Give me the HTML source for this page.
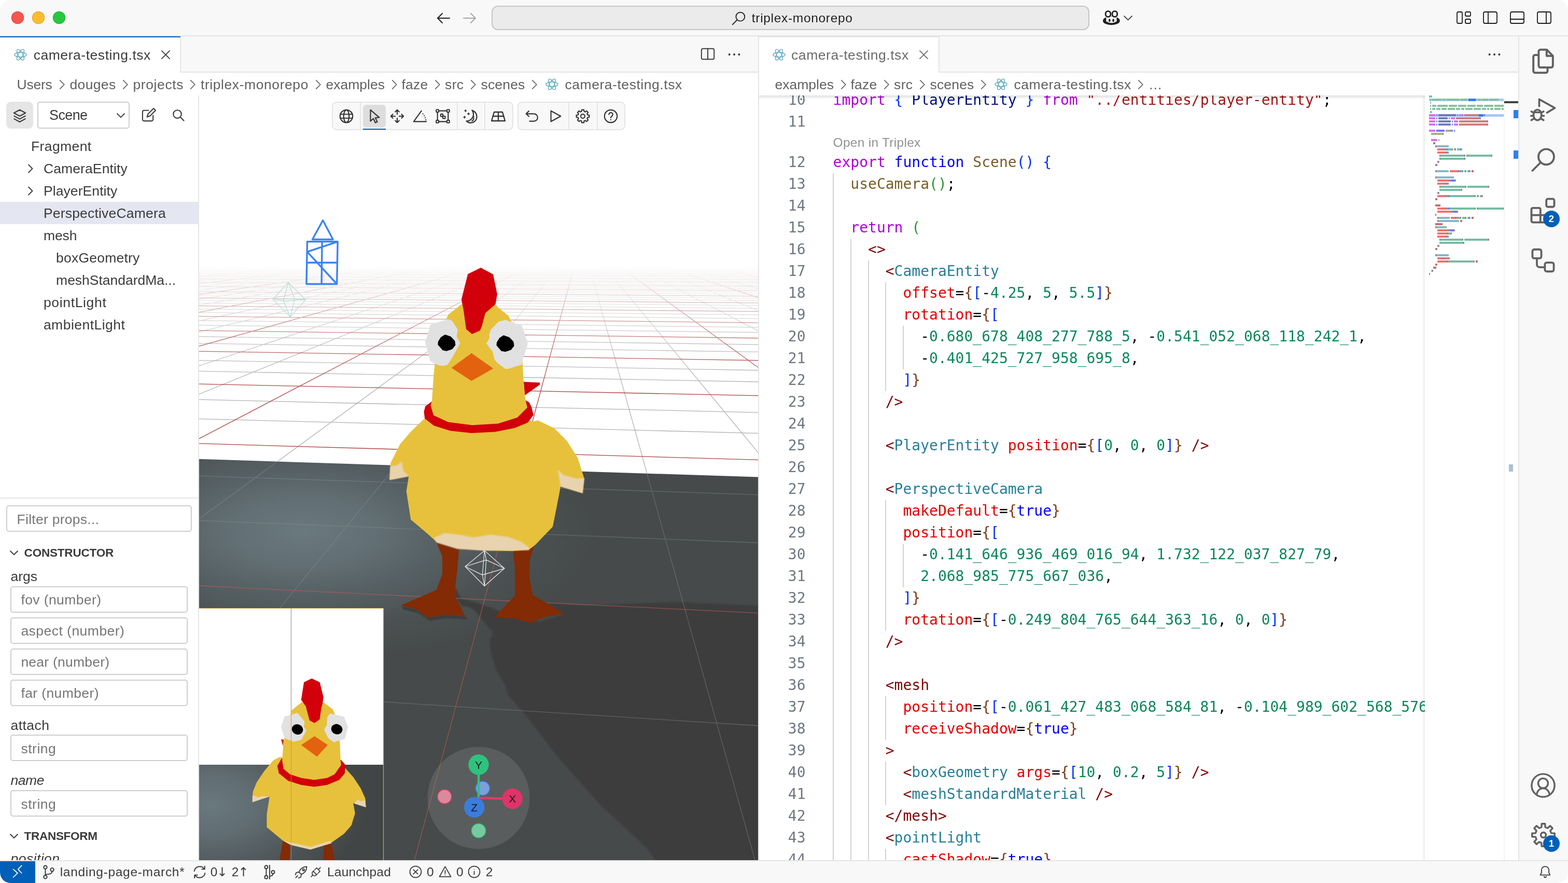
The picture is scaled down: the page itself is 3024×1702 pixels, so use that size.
<!DOCTYPE html><html><head><meta charset="utf-8"><title>camera-testing.tsx — triplex-monorepo</title><style>
html,body{margin:0;padding:0}
body{width:3024px;height:1702px;position:relative;overflow:hidden;background:#fff;font-family:"Liberation Sans",sans-serif;-webkit-font-smoothing:antialiased}
.t{position:absolute;white-space:pre}
.code{position:absolute;overflow:hidden;background:#fff;font-family:"DejaVu Sans Mono","Liberation Mono",monospace;font-size:28px}
.code .ln{position:absolute;left:0;width:89.5px;text-align:right;height:42px;line-height:42px;color:#6e7681}
.code .cl{position:absolute;left:142.6px;height:42px;line-height:42px;white-space:pre;color:#000}
.code .g{position:absolute;width:2px;background:#d3d3d3}
.code .lens{position:absolute;left:142.6px;font-family:"Liberation Sans",sans-serif;font-size:24.5px;line-height:40px;color:#919191;white-space:pre;letter-spacing:.28px}
.inp{position:absolute;box-sizing:border-box;border:2px solid #cecece;border-radius:5px;background:#fff}
</style></head><body><div id="app" style="position:absolute;left:0;top:0;width:3024px;height:1702px;overflow:hidden;will-change:transform">
<div style="position:absolute;left:0px;top:0px;width:3024px;height:68px;background:#f8f8f8;"></div>
<div style="position:absolute;left:0px;top:68px;width:3024px;height:2px;background:#e5e5e5;"></div>
<div style="position:absolute;left:22px;top:22px;width:24px;height:24px;border-radius:50%;background:#f6564f;box-shadow:inset 0 0 0 1px #e2403a"></div>
<div style="position:absolute;left:62px;top:22px;width:24px;height:24px;border-radius:50%;background:#fbbd2e;box-shadow:inset 0 0 0 1px #dfa023"></div>
<div style="position:absolute;left:102px;top:22px;width:24px;height:24px;border-radius:50%;background:#27c83f;box-shadow:inset 0 0 0 1px #1aab2c"></div>
<svg viewBox="0 0 16 16" width="32" height="32" style="position:absolute;left:838.5px;top:18.8px;overflow:visible" fill="none" stroke="#1f1f1f" stroke-width="1.05" stroke-linecap="round" stroke-linejoin="round" ><path d="M14 8H2.5M7 3.5L2.5 8 7 12.5"/></svg>
<svg viewBox="0 0 16 16" width="32" height="32" style="position:absolute;left:890.0px;top:18.8px;overflow:visible" fill="none" stroke="#a8a8a8" stroke-width="1.05" stroke-linecap="round" stroke-linejoin="round" ><path d="M2 8h11.5M9 3.5L13.5 8 9 12.5"/></svg>
<div style="position:absolute;left:948px;top:10.5px;width:1153px;height:47px;box-sizing:border-box;border:2px solid #c6c6c6;border-radius:12px;background:#ebebeb"></div>
<svg viewBox="0 0 16 16" width="30" height="30" style="position:absolute;left:1410.0px;top:19.5px;overflow:visible" fill="none" stroke="#2b2b2b" stroke-width="1.05" stroke-linecap="round" stroke-linejoin="round" ><circle cx="9.5" cy="6.5" r="4.5"/><path d="M6.3 9.7L1.5 14.5"/></svg>
<span class="t" style="left:1449.8px;top:20.3px;font-size:24.5px;line-height:30.62px;color:#1f1f1f;letter-spacing:0.69px;">triplex-monorepo</span>
<svg viewBox="0 0 33 28.4" width="33" height="28.4" style="position:absolute;left:2127px;top:19.7px;overflow:visible"><ellipse cx="16.4" cy="19.9" rx="16.4" ry="8.4" fill="#1f1f1f"/><path d="M6.3 12V21.2Q16.4 27.2 26.6 21.2V12Z" fill="#f8f8f8"/><rect x="5.2" y="1.6" width="9.6" height="10.8" rx="4.4" fill="#f8f8f8" stroke="#1f1f1f" stroke-width="2.8"/><rect x="18.1" y="1.6" width="9.6" height="10.8" rx="4.4" fill="#f8f8f8" stroke="#1f1f1f" stroke-width="2.8"/><rect x="11.1" y="16.2" width="3.4" height="6.1" rx="1.7" fill="#1f1f1f"/><rect x="18.4" y="16.2" width="3.4" height="6.1" rx="1.7" fill="#1f1f1f"/></svg>
<svg viewBox="0 0 15 7.5" width="15" height="7.5" style="position:absolute;left:2168.0px;top:30.9px;overflow:visible" fill="none" stroke="#1f1f1f" stroke-width="1.6" stroke-linecap="round" stroke-linejoin="round" stroke-linecap="butt"><path d="M0 0L7.5 7.5L15 0"/></svg>
<svg viewBox="0 0 16 16" width="32" height="32" style="position:absolute;left:2807.0px;top:18.0px;overflow:visible" fill="none" stroke="#1a1a1a" stroke-width="0.9" stroke-linecap="round" stroke-linejoin="round" ><rect x="1.5" y="2.5" width="5" height="11" rx="1"/><rect x="9.5" y="2.5" width="5" height="4" rx="1"/><rect x="9.5" y="9.5" width="5" height="4" rx="1"/></svg>
<svg viewBox="0 0 16 16" width="32" height="32" style="position:absolute;left:2858.0px;top:18.0px;overflow:visible" fill="none" stroke="#1a1a1a" stroke-width="0.9" stroke-linecap="round" stroke-linejoin="round" ><rect x="1.5" y="2.5" width="13" height="11" rx="1.5"/><path d="M6 2.5v11"/></svg>
<svg viewBox="0 0 16 16" width="32" height="32" style="position:absolute;left:2910.0px;top:18.0px;overflow:visible" fill="none" stroke="#1a1a1a" stroke-width="0.9" stroke-linecap="round" stroke-linejoin="round" ><rect x="1.5" y="2.5" width="13" height="11" rx="1.5"/><path d="M1.5 9.5h13"/></svg>
<svg viewBox="0 0 16 16" width="32" height="32" style="position:absolute;left:2962.0px;top:18.0px;overflow:visible" fill="none" stroke="#1a1a1a" stroke-width="0.9" stroke-linecap="round" stroke-linejoin="round" ><rect x="1.5" y="2.5" width="13" height="11" rx="1.5"/><path d="M10 2.5v11"/></svg>
<div style="position:absolute;left:0px;top:70px;width:3024px;height:70px;background:#f8f8f8;"></div>
<div style="position:absolute;left:0px;top:138px;width:2928px;height:2px;background:#e5e5e5;"></div>
<div style="position:absolute;left:0px;top:70px;width:348px;height:70px;background:#fff;"></div>
<div style="position:absolute;left:0px;top:70px;width:348px;height:2.2px;background:#005fb8;"></div>
<div style="position:absolute;left:347px;top:72px;width:1.5px;height:68px;background:#e5e5e5;"></div>
<svg viewBox="0 0 16 16" width="25" height="25" style="position:absolute;left:27.1px;top:92.7px;overflow:visible" fill="none" stroke="#3b3b3b" stroke-width="1.1" stroke-linecap="round" stroke-linejoin="round" ><g stroke="#4b9fbb" stroke-width=".8" fill="none"><ellipse cx="8" cy="8" rx="7.4" ry="2.9"/><ellipse cx="8" cy="8" rx="7.4" ry="2.9" transform="rotate(60 8 8)"/><ellipse cx="8" cy="8" rx="7.4" ry="2.9" transform="rotate(120 8 8)"/></g></svg>
<span class="t" style="left:64.7px;top:90.2px;font-size:26.5px;line-height:33.12px;color:#3b3b3b;letter-spacing:0.54px;">camera-testing.tsx</span>
<svg viewBox="0 0 16 16" width="27" height="27" style="position:absolute;left:306.1px;top:92.1px;overflow:visible" fill="none" stroke="#3b3b3b" stroke-width="1.05" stroke-linecap="round" stroke-linejoin="round" ><path d="M3.5 3.5l9 9M12.5 3.5l-9 9"/></svg>
<svg viewBox="0 0 16 16" width="30" height="30" style="position:absolute;left:1350.0px;top:89.0px;overflow:visible" fill="none" stroke="#3b3b3b" stroke-width="1.05" stroke-linecap="round" stroke-linejoin="round" ><rect x="1.5" y="2.5" width="13" height="11" rx="1.5"/><path d="M8 2.5v11"/></svg>
<svg viewBox="0 0 16 16" width="30" height="30" style="position:absolute;left:1401.0px;top:89.6px;overflow:visible" fill="none" stroke="#3b3b3b" stroke-width="1.1" stroke-linecap="round" stroke-linejoin="round" ><circle cx="3" cy="8" r="1.1" fill="#3b3b3b" stroke="none"/><circle cx="8" cy="8" r="1.1" fill="#3b3b3b" stroke="none"/><circle cx="13" cy="8" r="1.1" fill="#3b3b3b" stroke="none"/></svg>
<div style="position:absolute;left:1462px;top:70px;width:2px;height:1588px;background:#e5e5e5;"></div>
<div style="position:absolute;left:1464px;top:70px;width:347px;height:70px;background:#fff;"></div>
<div style="position:absolute;left:1464px;top:70px;width:347px;height:2px;background:#e3e3e3;"></div>
<div style="position:absolute;left:1810px;top:70px;width:1.5px;height:68px;background:#e5e5e5;"></div>
<svg viewBox="0 0 16 16" width="25" height="25" style="position:absolute;left:1489.5px;top:92.5px;overflow:visible" fill="none" stroke="#3b3b3b" stroke-width="1.1" stroke-linecap="round" stroke-linejoin="round" ><g stroke="#4b9fbb" stroke-width=".8" fill="none"><ellipse cx="8" cy="8" rx="7.4" ry="2.9"/><ellipse cx="8" cy="8" rx="7.4" ry="2.9" transform="rotate(60 8 8)"/><ellipse cx="8" cy="8" rx="7.4" ry="2.9" transform="rotate(120 8 8)"/></g></svg>
<span class="t" style="left:1526.0px;top:90.2px;font-size:26.5px;line-height:33.12px;color:#6b6b6b;letter-spacing:0.57px;">camera-testing.tsx</span>
<svg viewBox="0 0 16 16" width="27" height="27" style="position:absolute;left:1768.1px;top:92.1px;overflow:visible" fill="none" stroke="#6b6b6b" stroke-width="1.05" stroke-linecap="round" stroke-linejoin="round" ><path d="M3.5 3.5l9 9M12.5 3.5l-9 9"/></svg>
<svg viewBox="0 0 16 16" width="30" height="30" style="position:absolute;left:2867.0px;top:89.6px;overflow:visible" fill="none" stroke="#3b3b3b" stroke-width="1.1" stroke-linecap="round" stroke-linejoin="round" ><circle cx="3" cy="8" r="1.1" fill="#3b3b3b" stroke="none"/><circle cx="8" cy="8" r="1.1" fill="#3b3b3b" stroke="none"/><circle cx="13" cy="8" r="1.1" fill="#3b3b3b" stroke="none"/></svg>
<div style="position:absolute;left:0px;top:140px;width:1462px;height:44px;background:#fff;"></div>
<div style="position:absolute;left:1464px;top:140px;width:1464px;height:44px;background:#fff;"></div>
<span class="t" style="left:32.5px;top:146.9px;font-size:26.5px;line-height:33.12px;color:#616161;letter-spacing:-0.24px;">Users</span>
<svg viewBox="0 0 16 16" width="26" height="26" style="position:absolute;left:105.5px;top:150.3px;overflow:visible" fill="none" stroke="#616161" stroke-width="1.05" stroke-linecap="round" stroke-linejoin="round" ><path d="M6 3l5 5-5 5"/></svg>
<span class="t" style="left:134.5px;top:146.9px;font-size:26.5px;line-height:33.12px;color:#616161;letter-spacing:0.34px;">douges</span>
<svg viewBox="0 0 16 16" width="26" height="26" style="position:absolute;left:228.0px;top:150.3px;overflow:visible" fill="none" stroke="#616161" stroke-width="1.05" stroke-linecap="round" stroke-linejoin="round" ><path d="M6 3l5 5-5 5"/></svg>
<span class="t" style="left:256.5px;top:146.9px;font-size:26.5px;line-height:33.12px;color:#616161;letter-spacing:0.59px;">projects</span>
<svg viewBox="0 0 16 16" width="26" height="26" style="position:absolute;left:358.0px;top:150.3px;overflow:visible" fill="none" stroke="#616161" stroke-width="1.05" stroke-linecap="round" stroke-linejoin="round" ><path d="M6 3l5 5-5 5"/></svg>
<span class="t" style="left:387.0px;top:146.9px;font-size:26.5px;line-height:33.12px;color:#616161;letter-spacing:0.57px;">triplex-monorepo</span>
<svg viewBox="0 0 16 16" width="26" height="26" style="position:absolute;left:600.0px;top:150.3px;overflow:visible" fill="none" stroke="#616161" stroke-width="1.05" stroke-linecap="round" stroke-linejoin="round" ><path d="M6 3l5 5-5 5"/></svg>
<span class="t" style="left:628.5px;top:146.9px;font-size:26.5px;line-height:33.12px;color:#616161;letter-spacing:0.01px;">examples</span>
<svg viewBox="0 0 16 16" width="26" height="26" style="position:absolute;left:746.5px;top:150.3px;overflow:visible" fill="none" stroke="#616161" stroke-width="1.05" stroke-linecap="round" stroke-linejoin="round" ><path d="M6 3l5 5-5 5"/></svg>
<span class="t" style="left:774.5px;top:146.9px;font-size:26.5px;line-height:33.12px;color:#616161;letter-spacing:0.23px;">faze</span>
<svg viewBox="0 0 16 16" width="26" height="26" style="position:absolute;left:829.5px;top:150.3px;overflow:visible" fill="none" stroke="#616161" stroke-width="1.05" stroke-linecap="round" stroke-linejoin="round" ><path d="M6 3l5 5-5 5"/></svg>
<span class="t" style="left:858.0px;top:146.9px;font-size:26.5px;line-height:33.12px;color:#616161;letter-spacing:0.39px;">src</span>
<svg viewBox="0 0 16 16" width="26" height="26" style="position:absolute;left:898.5px;top:150.3px;overflow:visible" fill="none" stroke="#616161" stroke-width="1.05" stroke-linecap="round" stroke-linejoin="round" ><path d="M6 3l5 5-5 5"/></svg>
<span class="t" style="left:927.5px;top:146.9px;font-size:26.5px;line-height:33.12px;color:#616161;letter-spacing:0.17px;">scenes</span>
<svg viewBox="0 0 16 16" width="26" height="26" style="position:absolute;left:1017.0px;top:150.3px;overflow:visible" fill="none" stroke="#616161" stroke-width="1.05" stroke-linecap="round" stroke-linejoin="round" ><path d="M6 3l5 5-5 5"/></svg>
<svg viewBox="0 0 16 16" width="25" height="25" style="position:absolute;left:1052.0px;top:150.3px;overflow:visible" fill="none" stroke="#3b3b3b" stroke-width="1.1" stroke-linecap="round" stroke-linejoin="round" ><g stroke="#4b9fbb" stroke-width=".8" fill="none"><ellipse cx="8" cy="8" rx="7.4" ry="2.9"/><ellipse cx="8" cy="8" rx="7.4" ry="2.9" transform="rotate(60 8 8)"/><ellipse cx="8" cy="8" rx="7.4" ry="2.9" transform="rotate(120 8 8)"/></g></svg>
<span class="t" style="left:1089.5px;top:146.9px;font-size:26.5px;line-height:33.12px;color:#616161;letter-spacing:0.54px;">camera-testing.tsx</span>
<span class="t" style="left:1494.5px;top:146.9px;font-size:26.5px;line-height:33.12px;color:#616161;letter-spacing:0.01px;">examples</span>
<svg viewBox="0 0 16 16" width="26" height="26" style="position:absolute;left:1612.5px;top:150.3px;overflow:visible" fill="none" stroke="#616161" stroke-width="1.05" stroke-linecap="round" stroke-linejoin="round" ><path d="M6 3l5 5-5 5"/></svg>
<span class="t" style="left:1640.5px;top:146.9px;font-size:26.5px;line-height:33.12px;color:#616161;letter-spacing:0.23px;">faze</span>
<svg viewBox="0 0 16 16" width="26" height="26" style="position:absolute;left:1695.5px;top:150.3px;overflow:visible" fill="none" stroke="#616161" stroke-width="1.05" stroke-linecap="round" stroke-linejoin="round" ><path d="M6 3l5 5-5 5"/></svg>
<span class="t" style="left:1724.0px;top:146.9px;font-size:26.5px;line-height:33.12px;color:#616161;letter-spacing:0.39px;">src</span>
<svg viewBox="0 0 16 16" width="26" height="26" style="position:absolute;left:1764.5px;top:150.3px;overflow:visible" fill="none" stroke="#616161" stroke-width="1.05" stroke-linecap="round" stroke-linejoin="round" ><path d="M6 3l5 5-5 5"/></svg>
<span class="t" style="left:1793.5px;top:146.9px;font-size:26.5px;line-height:33.12px;color:#616161;letter-spacing:0.17px;">scenes</span>
<svg viewBox="0 0 16 16" width="26" height="26" style="position:absolute;left:1883.0px;top:150.3px;overflow:visible" fill="none" stroke="#616161" stroke-width="1.05" stroke-linecap="round" stroke-linejoin="round" ><path d="M6 3l5 5-5 5"/></svg>
<svg viewBox="0 0 16 16" width="25" height="25" style="position:absolute;left:1918.0px;top:150.3px;overflow:visible" fill="none" stroke="#3b3b3b" stroke-width="1.1" stroke-linecap="round" stroke-linejoin="round" ><g stroke="#4b9fbb" stroke-width=".8" fill="none"><ellipse cx="8" cy="8" rx="7.4" ry="2.9"/><ellipse cx="8" cy="8" rx="7.4" ry="2.9" transform="rotate(60 8 8)"/><ellipse cx="8" cy="8" rx="7.4" ry="2.9" transform="rotate(120 8 8)"/></g></svg>
<span class="t" style="left:1955.5px;top:146.9px;font-size:26.5px;line-height:33.12px;color:#616161;letter-spacing:0.54px;">camera-testing.tsx</span>
<svg viewBox="0 0 16 16" width="26" height="26" style="position:absolute;left:2186.0px;top:150.3px;overflow:visible" fill="none" stroke="#616161" stroke-width="1.05" stroke-linecap="round" stroke-linejoin="round" ><path d="M6 3l5 5-5 5"/></svg>
<span class="t" style="left:2215.0px;top:146.9px;font-size:26.5px;line-height:33.12px;color:#616161;">…</span>
<div style="position:absolute;left:0px;top:184px;width:382px;height:1474px;background:#fff;"></div>
<div style="position:absolute;left:382px;top:184px;width:2px;height:1474px;background:#e5e5e5;"></div>
<div style="position:absolute;left:12px;top:196px;width:52px;height:52px;border-radius:9px;background:#e5e5e5"></div>
<svg viewBox="0 0 16 16" width="30" height="30" style="position:absolute;left:23.0px;top:207.5px;overflow:visible" fill="none" stroke="#3b3b3b" stroke-width="1.1" stroke-linecap="round" stroke-linejoin="round" ><path d="M8 2L2 5.2 8 8.4l6-3.2zM2.3 8.3L8 11.4l5.7-3.1M2.3 11.3L8 14.4l5.7-3.1"/></svg>
<div class="inp" style="left:72px;top:196px;width:178px;height:52px"></div>
<span class="t" style="left:95.0px;top:206.4px;font-size:27px;line-height:33.75px;color:#3b3b3b;letter-spacing:-0.61px;">Scene</span>
<svg viewBox="0 0 16 16" width="22" height="22" style="position:absolute;left:222.0px;top:210.5px;overflow:visible" fill="none" stroke="#3b3b3b" stroke-width="1.4" stroke-linecap="round" stroke-linejoin="round" ><path d="M3 6l5 5 5-5"/></svg>
<svg viewBox="0 0 16 16" width="31" height="31" style="position:absolute;left:270.5px;top:206.0px;overflow:visible" fill="none" stroke="#3b3b3b" stroke-width="1.1" stroke-linecap="round" stroke-linejoin="round" ><path d="M12.5 8.5v4a1.5 1.5 0 0 1-1.5 1.5H3.5A1.5 1.5 0 0 1 2 12.5V5a1.5 1.5 0 0 1 1.5-1.5H8"/><path d="M6.5 10l1-3 5.5-5.5 2 2L9.5 9z"/></svg>
<svg viewBox="0 0 16 16" width="26" height="26" style="position:absolute;left:331.3px;top:208.8px;overflow:visible" fill="none" stroke="#3b3b3b" stroke-width="1.3" stroke-linecap="round" stroke-linejoin="round" ><circle cx="6.8" cy="6.8" r="4.8"/><path d="M10.3 10.3L14.5 14.5"/></svg>
<div style="position:absolute;left:0px;top:389px;width:382px;height:43px;background:#e4e6f1;"></div>
<span class="t" style="left:60.0px;top:265.9px;font-size:26.5px;line-height:33.12px;color:#3b3b3b;letter-spacing:0.39px;">Fragment</span>
<span class="t" style="left:83.9px;top:308.9px;font-size:26.5px;line-height:33.12px;color:#3b3b3b;letter-spacing:0.12px;">CameraEntity</span>
<svg viewBox="0 0 16 16" width="24" height="24" style="position:absolute;left:46.0px;top:313.0px;overflow:visible" fill="none" stroke="#3b3b3b" stroke-width="1.2" stroke-linecap="round" stroke-linejoin="round" ><path d="M6 3l5 5-5 5"/></svg>
<span class="t" style="left:83.9px;top:351.9px;font-size:26.5px;line-height:33.12px;color:#3b3b3b;letter-spacing:0.09px;">PlayerEntity</span>
<svg viewBox="0 0 16 16" width="24" height="24" style="position:absolute;left:46.0px;top:356.0px;overflow:visible" fill="none" stroke="#3b3b3b" stroke-width="1.2" stroke-linecap="round" stroke-linejoin="round" ><path d="M6 3l5 5-5 5"/></svg>
<span class="t" style="left:83.9px;top:394.9px;font-size:26.5px;line-height:33.12px;color:#3b3b3b;letter-spacing:0.19px;">PerspectiveCamera</span>
<span class="t" style="left:83.9px;top:438.2px;font-size:26.5px;line-height:33.12px;color:#3b3b3b;letter-spacing:-0.08px;">mesh</span>
<span class="t" style="left:108.1px;top:481.1px;font-size:26.5px;line-height:33.12px;color:#3b3b3b;letter-spacing:0.22px;">boxGeometry</span>
<span class="t" style="left:108.1px;top:524.3px;font-size:26.5px;line-height:33.12px;color:#3b3b3b;letter-spacing:-0.02px;">meshStandardMa...</span>
<span class="t" style="left:83.9px;top:567.1px;font-size:26.5px;line-height:33.12px;color:#3b3b3b;letter-spacing:0.66px;">pointLight</span>
<span class="t" style="left:83.9px;top:609.9px;font-size:26.5px;line-height:33.12px;color:#3b3b3b;letter-spacing:0.48px;">ambientLight</span>
<div style="position:absolute;left:0px;top:959px;width:382px;height:2px;background:#e5e5e5;"></div>
<div class="inp" style="left:12px;top:973.5px;width:358px;height:51px"></div>
<span class="t" style="left:32.6px;top:984.6px;font-size:26.5px;line-height:33.12px;color:#767676;letter-spacing:0.26px;">Filter props...</span>
<svg viewBox="0 0 16 16" width="22" height="22" style="position:absolute;left:16.0px;top:1054.2px;overflow:visible" fill="none" stroke="#3b3b3b" stroke-width="1.5" stroke-linecap="round" stroke-linejoin="round" ><path d="M3 6l5 5 5-5"/></svg>
<span class="t" style="left:46.6px;top:1052.1px;font-size:22.5px;line-height:28.12px;color:#3b3b3b;letter-spacing:-0.20px;font-weight:bold;">CONSTRUCTOR</span>
<span class="t" style="left:20.5px;top:1094.6px;font-size:26.5px;line-height:33.12px;color:#3b3b3b;letter-spacing:-0.01px;">args</span>
<div class="inp" style="left:20px;top:1129.5px;width:342px;height:51px"></div>
<span class="t" style="left:40.4px;top:1139.9px;font-size:26.5px;line-height:33.12px;color:#767676;letter-spacing:0.40px;">fov (number)</span>
<div class="inp" style="left:20px;top:1189.5px;width:342px;height:51px"></div>
<span class="t" style="left:40.4px;top:1199.9px;font-size:26.5px;line-height:33.12px;color:#767676;letter-spacing:0.47px;">aspect (number)</span>
<div class="inp" style="left:20px;top:1249.7px;width:342px;height:51px"></div>
<span class="t" style="left:40.4px;top:1260.1px;font-size:26.5px;line-height:33.12px;color:#767676;letter-spacing:0.24px;">near (number)</span>
<div class="inp" style="left:20px;top:1309.5px;width:342px;height:51px"></div>
<span class="t" style="left:40.4px;top:1319.9px;font-size:26.5px;line-height:33.12px;color:#767676;letter-spacing:0.39px;">far (number)</span>
<span class="t" style="left:20.5px;top:1381.6px;font-size:26.5px;line-height:33.12px;color:#3b3b3b;letter-spacing:0.47px;">attach</span>
<div class="inp" style="left:20px;top:1416.3px;width:342px;height:51px"></div>
<span class="t" style="left:40.4px;top:1426.7px;font-size:26.5px;line-height:33.12px;color:#767676;letter-spacing:0.53px;">string</span>
<span class="t" style="left:20.5px;top:1488.1px;font-size:26.5px;line-height:33.12px;color:#3b3b3b;letter-spacing:-0.45px;font-style:italic;">name</span>
<div class="inp" style="left:20px;top:1523.3px;width:342px;height:51px"></div>
<span class="t" style="left:40.4px;top:1533.7px;font-size:26.5px;line-height:33.12px;color:#767676;letter-spacing:0.53px;">string</span>
<svg viewBox="0 0 16 16" width="22" height="22" style="position:absolute;left:16.0px;top:1600.3px;overflow:visible" fill="none" stroke="#3b3b3b" stroke-width="1.5" stroke-linecap="round" stroke-linejoin="round" ><path d="M3 6l5 5 5-5"/></svg>
<span class="t" style="left:46.6px;top:1598.2px;font-size:22.5px;line-height:28.12px;color:#3b3b3b;letter-spacing:-0.30px;font-weight:bold;">TRANSFORM</span>
<div style="position:absolute;left:0;top:1630px;width:382px;height:28px;overflow:hidden"><span class="t" style="left:20.5px;top:8.6px;font-size:26.5px;line-height:33.12px;color:#3b3b3b;letter-spacing:0.46px;font-style:italic;">position</span></div>
<svg viewBox="384 184 1078 1474" width="1078" height="1474" style="position:absolute;left:384px;top:184px;display:block">
<defs>
<radialGradient id="fl" gradientUnits="userSpaceOnUse" cx="0" cy="0" r="1" gradientTransform="translate(585 1025) scale(560 250)">
<stop offset="0" stop-color="#6a797e"/><stop offset=".25" stop-color="#626f74"/><stop offset=".5" stop-color="#555f62"/><stop offset=".75" stop-color="#4b5152"/><stop offset="1" stop-color="#464a4a"/></radialGradient>
<radialGradient id="fl2" gradientUnits="userSpaceOnUse" cx="0" cy="0" r="1" gradientTransform="translate(405 1552) scale(300 190)">
<stop offset="0" stop-color="#6a797e"/><stop offset=".3" stop-color="#606d72"/><stop offset=".6" stop-color="#525a5d"/><stop offset="1" stop-color="#424545"/></radialGradient>
<linearGradient id="fade" gradientUnits="userSpaceOnUse" x1="0" y1="514" x2="0" y2="760"><stop offset="0" stop-color="#fff" stop-opacity="0"/><stop offset=".25" stop-color="#fff" stop-opacity=".3"/><stop offset=".6" stop-color="#fff" stop-opacity=".75"/><stop offset="1" stop-color="#fff" stop-opacity="1"/></linearGradient>
<mask id="gm" maskUnits="userSpaceOnUse" x="384" y="184" width="1078" height="1474"><rect x="384" y="514" width="1078" height="1144" fill="url(#fade)"/></mask>
<filter id="b1" x="-20%" y="-20%" width="140%" height="140%"><feGaussianBlur stdDeviation="1.2"/></filter>
<filter id="b6" x="-20%" y="-20%" width="140%" height="140%"><feGaussianBlur stdDeviation="1.6"/></filter>
<clipPath id="skc"><polygon points="384,184 1462,184 1462,919.5 384,884.8"/></clipPath>
<clipPath id="flc"><polygon points="384,884.8 1462,919.5 1462,1658 384,1658"/></clipPath>
<clipPath id="inset"><rect x="384" y="1172" width="356" height="486"/></clipPath>
</defs>
<rect x="384" y="184" width="1078" height="1474" fill="#fff"/>
<polygon points="384,884.8 1462,919.5 1462,1658 384,1658" fill="url(#fl)"/>
<g clip-path="url(#flc)"><polygon filter="url(#b6)" points="878.8,1134.0 880.9,1138.2 885.8,1147.9 890.0,1154.2 906.7,1157.7 924.9,1163.3 941.7,1168.9 962.6,1177.3 969.6,1184.3 1039.5,1198.3 1087.0,1183.6 1053.5,1161.9 1120.0,1167.5 1300,1160 1470,1168 1470,1670 1272,1670 1245,1632 1156,1550 1073,1456 1018,1384 980,1340 973.8,1320.0 962.6,1301.7 955.6,1287.7 951.4,1273.7 947.3,1259.7 945.2,1245.8 944.5,1231.8 949.4,1226.2 950.1,1217.8 941.7,1209.4 930.5,1195.5 920.7,1182.9 910.9,1173.1 899.7,1168.9 891.4,1168.9 880.2,1153.5 877.4,1147.9" fill="#3d3d3d"/>
<polygon filter="url(#b1)" points="775.4,1168.2 801.9,1174.5 824.3,1189.9 860.6,1185.0 897.6,1187.8 901.8,1194.1 860.6,1191.3 828.5,1196.6 806.1,1181.5 777.5,1174.8" fill="#3d3d3d"/></g>
<defs><path id="gg" d="M1265.2 500.0L1466.0 500.7M1117.9 500.0L1466.0 501.2M820.7 500.0L1466.0 502.3M670.8 500.0L1466.0 502.8M380.0 500.0L1466.0 504.0M380.0 500.6L1466.0 504.6M380.0 501.8L1466.0 505.8M380.0 502.4L1466.0 506.5M380.0 503.7L1466.0 507.9M380.0 504.3L1466.0 508.6M380.0 505.7L1466.0 510.1M380.0 506.5L1466.0 510.9M380.0 508.0L1466.0 512.6M380.0 508.8L1466.0 513.4M380.0 510.5L1466.0 515.3M380.0 511.4L1466.0 516.2M380.0 513.3L1466.0 518.3M380.0 514.3L1466.0 519.3M380.0 516.4L1466.0 521.6M380.0 517.5L1466.0 522.8M380.0 519.9L1466.0 525.4M380.0 521.2L1466.0 526.7M380.0 523.8L1466.0 529.7M380.0 525.3L1466.0 531.2M380.0 528.4L1466.0 534.5M380.0 530.0L1466.0 536.3M380.0 533.6L1466.0 540.1M380.0 535.5L1466.0 542.2M380.0 539.6L1466.0 546.7M380.0 541.9L1466.0 549.1M380.0 546.8L1466.0 554.4M380.0 549.5L1466.0 557.3M380.0 555.4L1466.0 563.7M380.0 558.6L1466.0 567.2M380.0 565.9L1466.0 574.9M380.0 569.9L1466.0 579.3M380.0 578.9L1466.0 589.0M380.0 584.0L1466.0 594.5M380.0 595.6L1466.0 607.0M380.0 602.3L1466.0 614.2M380.0 617.8L1466.0 631.0M380.0 626.9L1466.0 640.8M380.0 648.7L1466.0 664.3M380.0 661.9L1466.0 678.5M380.0 694.6L1466.0 713.8M380.0 715.3L1466.0 736.1M380.0 770.1L1466.0 795.2M380.0 807.3L1466.0 835.3M380.0 917.2L1466.0 953.8M380.0 1003.1L1466.0 1046.4M380.0 1330.1L1466.0 1399.0M410.8 500.0L380.0 501.7M433.0 500.0L380.0 503.0M477.2 500.0L380.0 505.9M499.3 500.0L380.0 507.5M543.5 500.0L380.0 511.1M565.6 500.0L380.0 513.1M609.6 500.0L380.0 517.7M631.6 500.0L380.0 520.2M675.6 500.0L380.0 526.1M697.5 500.0L380.0 529.5M741.3 500.0L380.0 537.4M763.2 500.0L380.0 542.1M806.9 500.0L380.0 553.4M828.8 500.0L380.0 560.3M872.4 500.0L380.0 577.8M894.2 500.0L380.0 589.0M937.7 500.0L380.0 619.3M959.4 500.0L380.0 640.6M1002.8 500.0L380.0 706.4M1024.5 500.0L380.0 761.2M1067.8 500.0L380.0 1003.0M1089.4 500.0L380.0 1367.2M1132.6 500.0L1457.1 1662.0M1154.2 500.0L1466.0 877.0M1197.2 500.0L1466.0 639.9M1218.7 500.0L1466.0 600.2M1261.7 500.0L1466.0 557.4M1283.2 500.0L1466.0 544.5M1326.0 500.0L1466.0 526.9M1347.4 500.0L1466.0 520.7M1390.2 500.0L1466.0 511.1M1411.6 500.0L1466.0 507.4M1454.2 500.0L1466.0 501.4"/><path id="gr" d="M1411.8 500.0L1466.0 500.2M969.7 500.0L1466.0 501.7M520.1 500.0L1466.0 503.4M380.0 501.2L1466.0 505.2M380.0 503.0L1466.0 507.2M380.0 505.0L1466.0 509.3M380.0 507.2L1466.0 511.7M380.0 509.6L1466.0 514.3M380.0 512.3L1466.0 517.2M380.0 515.3L1466.0 520.5M380.0 518.7L1466.0 524.1M380.0 522.5L1466.0 528.2M380.0 526.8L1466.0 532.8M380.0 531.8L1466.0 538.2M380.0 537.5L1466.0 544.4M380.0 544.3L1466.0 551.7M380.0 552.3L1466.0 560.4M380.0 562.1L1466.0 570.9M380.0 574.2L1466.0 584.0M380.0 589.5L1466.0 600.5M380.0 609.6L1466.0 622.2M380.0 637.1L1466.0 651.8M380.0 677.0L1466.0 694.8M380.0 740.1L1466.0 762.8M380.0 854.8L1466.0 886.5M380.0 1128.8L1466.0 1181.9M388.6 500.0L380.0 500.5M455.1 500.0L380.0 504.4M521.4 500.0L380.0 509.3M587.6 500.0L380.0 515.3M653.6 500.0L380.0 523.0M719.4 500.0L380.0 533.2M785.1 500.0L380.0 547.4M850.6 500.0L380.0 568.3M915.9 500.0L380.0 602.6M981.1 500.0L380.0 668.4M1046.1 500.0L380.0 847.5M1111.0 500.0L798.2 1662.0M1175.7 500.0L1466.0 711.2M1240.2 500.0L1466.0 574.9M1304.6 500.0L1466.0 534.7M1368.8 500.0L1466.0 515.5M1432.9 500.0L1466.0 504.2"/></defs>
<g mask="url(#gm)" fill="none" stroke-width="1.3"><g clip-path="url(#skc)"><use href="#gg" stroke="#8c8c8c" stroke-opacity=".68"/><use href="#gr" stroke="#a32c2c" stroke-opacity=".9"/></g></g>
<g clip-path="url(#flc)" fill="none" stroke-width="1.3"><use href="#gg" stroke="#8d9797" stroke-opacity=".42"/><use href="#gr" stroke="#d05c5c" stroke-opacity=".6"/></g>
<g fill="none" stroke="#b5dcd4" stroke-width="1.2"><path d="M555.9 544.4L526.4 577L559.9 611.2L589.1 577.6ZM526.4 577L546.6 579.5L589.1 577.6L568.3 575.8ZM555.9 544.4L546.6 579.5L559.9 611.2L568.3 575.8Z"/></g>
<g fill="none" stroke="#3b82f6" stroke-width="3.4" stroke-linejoin="round"><path d="M622.7 424.8L602.5 461.5H642.2ZM592.5 465.8H651.2L649.7 547.5H591ZM621.1 465.8L620.2 547.5M592.5 506.2H650.3M651.2 465.8L592.5 485.4L649.7 547.5"/></g>
<polygon points="841.8,1045.8 852.8,1071.6 853.3,1105.6 841.8,1137.3 810.8,1150.6 773.2,1166.8 803.4,1174.9 824.1,1190.4 861.0,1184.9 897.1,1187.4 877.2,1148.3 881.3,1138.0 877.9,1133.6 882.4,1093.8 885.3,1058.4" fill="#822b04" /><polygon points="989.3,1059.8 993.0,1093.8 993.4,1148.3 953.2,1189.6 990.8,1191.9 1023.2,1200.7 1049.8,1189.6 1087.4,1183.0 1054.2,1162.4 1027.7,1146.9 1020.3,1108.5 1022.5,1076.1 1029.9,1053.2" fill="#822b04" /><polygon points="818.6,806.7 792.8,831.6 771.6,855.9 753.4,892.3 751.3,925.1 788.3,918.1 783.7,946.9 792.2,1001.5 824.7,1028.9 841.4,1044.0 883.9,1056.8 932.4,1060.7 988.6,1062.2 1020.5,1059.2 1032.6,1050.1 1066.0,1015.2 1073.6,977.3 1081.2,937.8 1123.6,950.6 1126.7,922.6 1114.5,883.2 1093.3,849.8 1069.0,825.5 1037.1,810.3 1028.0,812.8 993.1,798.2 841.4,792.1" fill="#e7c13b" /><polygon points="752.8,898.4 765.5,896.8 775.2,889.9 777.7,907.5 788.3,918.1 751.3,925.1" fill="#e9d3af" filter="url(#b1)"/><polygon points="1075.7,905.0 1087.2,916.0 1111.5,922.6 1126.7,922.0 1123.6,950.6 1081.2,937.8" fill="#e9d3af" filter="url(#b1)"/><polygon points="837.4,1036.2 858.0,1027.4 887.5,1031.1 912.6,1035.9 946.5,1030.6 979.0,1034.8 1005.5,1044.3 1020.3,1055.4 1020.3,1060.6 933.2,1061.3 881.6,1058.1 841.8,1045.8" fill="#e9d3af" filter="url(#b1)"/><polygon points="1009.9,736.1 1041.0,737.4 1041.0,741.5 1012.2,761.9" fill="#d2000a" /><polygon points="832.4,774.1 820.2,783.2 817.6,793.8 819.2,806.7 836.9,820.4 868.0,830.2 909.0,834.8 954.5,832.5 992.4,824.9 1018.2,814.3 1028.9,799.9 1025.1,784.7 1020.5,775.6 1013.7,771.8" fill="#d2000a" /><polygon points="890.3,586.2 864.8,606.2 860.0,616.0 845.0,640.0 839.2,696.7 836.1,725.5 833.1,771.0 830.5,781.7 836.1,800.6 864.2,813.5 910.5,819.6 960.6,816.6 997.8,804.7 1017.0,785.5 1013.7,771.8 1012.2,761.9 1009.9,736.1 1007.6,696.7 1000.0,640.0 986.2,619.3 980.7,609.0 954.5,586.9" fill="#e7c13b" /><polygon points="927.2,515.9 951.0,528.7 958.9,566.9 955.6,586.2 935.9,603.4 929.0,629.7 925.5,637.2 910.3,644.1 899.0,634.5 893.8,596.6 889.9,577.2 902.3,528.3" fill="#d2000a" /><polygon points="830.3,625.5 863.4,615.2 871.7,617.9 882.8,635.2 880.7,648.3 887.6,661.4 871.7,690.3 863.4,702.8 855.2,705.5 845.5,704.1 829.7,695.9 820.0,660.0" fill="#e1e1e1" /><polygon points="946.2,635.9 961.4,620.0 974.5,616.6 1006.9,627.6 1017.9,662.8 1008.3,693.1 1006.2,702.8 979.3,711.0 974.5,711.0 957.9,698.6 953.1,691.7 950.3,677.9 937.9,662.1 944.1,651.7 943.4,644.8" fill="#e1e1e1" /><polygon points="858.4,646.4 868.4,649.9 875.9,657.9 876.9,664.9 871.4,671.9 861.4,675.2 854.4,673.9 849.4,667.9 845.9,663.9 846.4,658.9 851.4,650.9" fill="#000" stroke="#000" stroke-width="3" stroke-linejoin="round"/><polygon points="971.5,647.8 981.5,651.3 989.0,659.3 990.0,666.3 984.5,673.3 974.5,676.6 967.5,675.3 962.5,669.3 959.0,665.3 959.5,660.3 964.5,652.3" fill="#000" stroke="#000" stroke-width="3" stroke-linejoin="round"/><polygon points="909.3,680.8 951.2,710.3 909.3,734.3 870.7,709.1" fill="#e3620f" />
<g fill="none" stroke="#e4e4e4" stroke-width="1.3"><path d="M934.4 1061.3L897.1 1092L934.4 1129.5L972.8 1095.5ZM897.1 1092L937.7 1079.3L972.8 1095.5L930.3 1108.2ZM934.4 1061.3L930.3 1108.2L934.4 1129.5L937.7 1079.3Z"/></g>
<g clip-path="url(#inset)"><rect x="384" y="1172" width="356" height="486" fill="#fff"/><rect x="384" y="1474" width="356" height="190" fill="url(#fl2)"/>
<path d="M561.5 1172V1400" stroke="#9a9a9a" stroke-width="1.2"/>
<polygon points="545.7,1620.4 560.0,1628.7 558.2,1659.1 538.8,1659.1" fill="#822b04" /><polygon points="624.9,1630.5 638.9,1625.4 646.0,1659.1 623.1,1659.1" fill="#822b04" /><polygon points="542.1,1424.7 547.1,1426.1 545.7,1437.6" fill="#d2000a" /><polygon points="539.6,1459.1 527.0,1465.5 509.1,1487.0 494.7,1508.6 487.6,1526.5 486.8,1546.2 519.8,1535.4 514.5,1569.5 514.5,1594.6 544.9,1619.7 561.1,1628.7 598.7,1637.6 638.2,1625.1 663.3,1607.2 677.6,1591.0 684.8,1567.7 681.2,1548.0 705.6,1555.9 704.5,1539.0 695.5,1519.3 681.2,1497.8 666.8,1481.7 659.7,1472.7" fill="#e7c13b" /><polygon points="545.7,1620.4 561.1,1624.0 598.7,1632.3 638.2,1620.4 638.9,1625.4 598.7,1637.6 561.1,1628.7" fill="#e9d3af" /><polygon points="486.8,1532.9 498.3,1536.5 505.5,1534.4 519.8,1535.4 486.8,1546.2" fill="#e9d3af" /><polygon points="690.1,1540.8 695.5,1544.4 704.5,1542.6 705.6,1555.9 683.0,1548.7" fill="#e9d3af" /><polygon points="543.1,1461.9 534.9,1476.3 537.8,1490.6 555.7,1505.0 580.8,1512.9 605.9,1516.4 631.0,1512.9 654.3,1503.2 665.0,1490.6 666.1,1474.5 657.9,1464.8" fill="#d2000a" /><polygon points="581.5,1353.7 562.9,1368.7 559.3,1379.5 546.7,1429.7 544.2,1465.5 546.7,1481.7 559.3,1492.4 580.8,1499.6 605.9,1503.2 631.0,1499.6 645.3,1492.4 657.9,1474.5 656.8,1465.5 655.4,1429.7 647.1,1379.5 641.7,1366.9 623.8,1353.7" fill="#e7c13b" /><polygon points="601.2,1307.8 616.6,1314.9 623.8,1343.6 622.0,1356.2 619.5,1365.1 616.6,1386.6 606.6,1393.8 596.9,1388.4 589.8,1361.5 580.8,1349.0 586.2,1314.9" fill="#d2000a" /><polygon points="548.5,1381.3 573.6,1374.1 587.2,1390.2 586.2,1401.0 590.8,1408.2 580.8,1426.1 566.4,1429.7 548.5,1422.5 542.1,1401.0" fill="#e1e1e1" /><polygon points="636.4,1375.2 663.3,1381.3 671.1,1401.0 665.0,1424.3 643.5,1430.4 632.8,1422.5 624.9,1406.4 630.3,1397.4 631.0,1383.1" fill="#e1e1e1" /><ellipse cx="573.6" cy="1406.0" rx="11" ry="9.8" transform="rotate(20 573.6 1406.0)" fill="#000"/><ellipse cx="649.6" cy="1405.6" rx="11" ry="9.8" transform="rotate(20 649.6 1405.6)" fill="#000"/><polygon points="606.6,1418.9 632.1,1436.1 611.3,1458.4 580.8,1436.1" fill="#e3620f" />
<path d="M561.5 1375V1658" stroke="#d08a30" stroke-opacity=".7" stroke-width="1.2"/>
</g>
<path d="M384 1172.5H739.5V1658" fill="none" stroke="#d9a441" stroke-width="1.2"/>
<circle cx="923" cy="1538" r="98.5" fill="#9a9a9a" fill-opacity=".24"/>
<circle cx="857.3" cy="1535.6" r="13.5" fill="#d98a9c" stroke="#e23a6d" stroke-width="1.5"/>
<circle cx="930.9" cy="1519.4" r="13.5" fill="#7ba0dc" stroke="#3a7be0" stroke-width="1.5"/>
<circle cx="923" cy="1601.2" r="13.5" fill="#79c9a0" stroke="#2ec27e" stroke-width="1.5"/>
<path d="M923 1538V1480" stroke="#2ec27e" stroke-width="4.5"/><path d="M923 1538L975 1539.5" stroke="#e23a6d" stroke-width="4.5"/>
<circle cx="923" cy="1474" r="19.7" fill="#2ec27e"/><circle cx="988.2" cy="1539.5" r="19.7" fill="#e0336a"/><circle cx="914.7" cy="1556" r="19.7" fill="#3b7ddd"/>
<text x="923" y="1481.5" text-anchor="middle" font-family="Liberation Sans, sans-serif" font-size="21" fill="#1a1a1a">Y</text>
<text x="988.2" y="1547.0" text-anchor="middle" font-family="Liberation Sans, sans-serif" font-size="21" fill="#1a1a1a">X</text>
<text x="914.7" y="1563.5" text-anchor="middle" font-family="Liberation Sans, sans-serif" font-size="21" fill="#1a1a1a">Z</text>
</svg>
<div style="position:absolute;left:640px;top:196.3px;width:350px;height:55px;box-sizing:border-box;border:2px solid #e5e5e5;border-radius:9px;background:#f8f8f8"></div>
<div style="position:absolute;left:998.3px;top:196.3px;width:207.4px;height:55px;box-sizing:border-box;border:2px solid #e5e5e5;border-radius:9px;background:#f8f8f8"></div>
<div style="position:absolute;left:694px;top:197.5px;width:2px;height:52.5px;background:#e5e5e5;"></div>
<div style="position:absolute;left:880.5px;top:197.5px;width:2px;height:52.5px;background:#e5e5e5;"></div>
<div style="position:absolute;left:934px;top:197.5px;width:2px;height:52.5px;background:#e5e5e5;"></div>
<div style="position:absolute;left:1096px;top:197.5px;width:2px;height:52.5px;background:#e5e5e5;"></div>
<div style="position:absolute;left:1150.5px;top:197.5px;width:2px;height:52.5px;background:#e5e5e5;"></div>
<div style="position:absolute;left:700px;top:202px;width:44px;height:44px;border-radius:6px;background:#dddddd"></div>
<div style="position:absolute;left:700px;top:247.5px;width:44px;height:2.5px;background:#005fb8;"></div>
<svg viewBox="0 0 16 16" width="30" height="30" style="position:absolute;left:652.8px;top:209.0px;overflow:visible" fill="none" stroke="#333" stroke-width="1.15" stroke-linecap="round" stroke-linejoin="round" ><circle cx="8" cy="8" r="6.5"/><ellipse cx="8" cy="8" rx="2.8" ry="6.5"/><path d="M1.8 6h12.4M1.8 10h12.4"/></svg>
<svg viewBox="0 0 16 16" width="30" height="30" style="position:absolute;left:707.0px;top:209.0px;overflow:visible" fill="none" stroke="#333" stroke-width="1.15" stroke-linecap="round" stroke-linejoin="round" ><path d="M4 1.5v11.5l3-2.6 2 4.3 2-.9-2-4.2 4-.3z"/></svg>
<svg viewBox="0 0 16 16" width="30" height="30" style="position:absolute;left:751.0px;top:209.0px;overflow:visible" fill="none" stroke="#333" stroke-width="1.15" stroke-linecap="round" stroke-linejoin="round" ><path d="M8 1.5v13M1.5 8h13M6 3.5l2-2 2 2M6 12.5l2 2 2-2M3.5 6l-2 2 2 2M12.5 6l2 2-2 2"/><circle cx="8" cy="8" r="1.6" fill="#f8f8f8" stroke="none"/></svg>
<svg viewBox="0 0 16 16" width="30" height="30" style="position:absolute;left:795.3px;top:209.0px;overflow:visible" fill="none" stroke="#333" stroke-width="1.15" stroke-linecap="round" stroke-linejoin="round" ><path d="M1.5 13.5h13M1.5 13.5L9.5 2.5"/><path d="M11 5.5c1.8 2 2.8 4.5 3 7" stroke-dasharray="0.1 2.2"/></svg>
<svg viewBox="0 0 16 16" width="30" height="30" style="position:absolute;left:839.0px;top:209.0px;overflow:visible" fill="none" stroke="#333" stroke-width="1.15" stroke-linecap="round" stroke-linejoin="round" ><rect x="2.5" y="2.5" width="11" height="11"/><rect x="1.2" y="1.2" width="2.6" height="2.6" rx=".6" fill="#f8f8f8"/><rect x="12.2" y="1.2" width="2.6" height="2.6" rx=".6" fill="#f8f8f8"/><rect x="1.2" y="12.2" width="2.6" height="2.6" rx=".6" fill="#f8f8f8"/><rect x="12.2" y="12.2" width="2.6" height="2.6" rx=".6" fill="#f8f8f8"/><rect x="5.8" y="5.8" width="2.4" height="2.4" rx=".4"/><rect x="8" y="8" width="2.4" height="2.4" rx=".4"/></svg>
<svg viewBox="0 0 16 16" width="31" height="31" style="position:absolute;left:892.3px;top:208.5px;overflow:visible" fill="none" stroke="#333" stroke-width="1.15" stroke-linecap="round" stroke-linejoin="round" ><path d="M9.5 1.8c3 1.2 4.7 3.8 4.7 6.5 0 3.5-2.8 6-6 6-1.8 0-3.3-.7-4.3-1.7 4.5-.3 7-3.5 7-7 0-1.4-.5-2.7-1.4-3.8z"/><path d="M11 9.5c.3 1-.3 2.2-1.5 3" /><circle cx="11.3" cy="8.3" r=".6" fill="#3b3b3b" stroke="none"/><path d="M3 1.5v1.6M2.2 2.3h1.6M6 4.5v1.8M5.1 5.4h1.8M2 7.8v1.8M1.1 8.7h1.8" stroke-width=".9"/></svg>
<svg viewBox="0 0 16 16" width="32" height="32" style="position:absolute;left:945.0px;top:208.0px;overflow:visible" fill="none" stroke="#333" stroke-width="1.15" stroke-linecap="round" stroke-linejoin="round" ><path d="M4 4h8l2.5 8.5h-13zM8 4v8.5M2.7 8h10.6"/></svg>
<svg viewBox="0 0 16 16" width="30" height="30" style="position:absolute;left:1011.2px;top:209.0px;overflow:visible" fill="none" stroke="#333" stroke-width="1.15" stroke-linecap="round" stroke-linejoin="round" ><path d="M2 5.5h8a3.8 3.8 0 0 1 0 7.6H5.5M4.8 2.7L2 5.5l2.8 2.8"/></svg>
<svg viewBox="0 0 16 16" width="30" height="30" style="position:absolute;left:1056.0px;top:209.0px;overflow:visible" fill="none" stroke="#333" stroke-width="1.15" stroke-linecap="round" stroke-linejoin="round" ><path d="M3.5 2.5l10 5.5-10 5.5z"/></svg>
<svg viewBox="0 0 16 16" width="30" height="30" style="position:absolute;left:1108.6px;top:209.0px;overflow:visible" fill="none" stroke="#333" stroke-width="1.15" stroke-linecap="round" stroke-linejoin="round" ><path d="M9.28 3.06L9.16 1.40L6.84 1.40L6.72 3.06L5.41 3.61L4.16 2.51L2.51 4.16L3.61 5.41L3.06 6.72L1.40 6.84L1.40 9.16L3.06 9.28L3.61 10.59L2.51 11.84L4.16 13.49L5.41 12.39L6.72 12.94L6.84 14.60L9.16 14.60L9.28 12.94L10.59 12.39L11.84 13.49L13.49 11.84L12.39 10.59L12.94 9.28L14.60 9.16L14.60 6.84L12.94 6.72L12.39 5.41L13.49 4.16L11.84 2.51L10.59 3.61Z"/><circle cx="8" cy="8" r="2.1"/></svg>
<svg viewBox="0 0 16 16" width="30" height="30" style="position:absolute;left:1162.9px;top:209.0px;overflow:visible" fill="none" stroke="#333" stroke-width="1.15" stroke-linecap="round" stroke-linejoin="round" ><circle cx="8" cy="8" r="6.5"/><path d="M6 6.2a2 2 0 1 1 3 1.8c-.7.4-1 .8-1 1.6"/><circle cx="8" cy="11.6" r=".7" fill="#3b3b3b" stroke="none"/></svg>
<div class="code" style="left:1464px;top:184px;width:1284px;height:1474px">
<i class="g" style="left:142.3px;top:149.6px;height:1386.0px"></i>
<i class="g" style="left:175.9px;top:275.6px;height:1260.0px"></i>
<i class="g" style="left:209.5px;top:317.6px;height:1218.0px"></i>
<i class="g" style="left:243.1px;top:359.6px;height:210.0px"></i>
<i class="g" style="left:243.1px;top:779.6px;height:252.0px"></i>
<i class="g" style="left:243.1px;top:1157.6px;height:84.0px"></i>
<i class="g" style="left:243.1px;top:1283.6px;height:84.0px"></i>
<i class="g" style="left:243.1px;top:1451.6px;height:84.0px"></i>
<i class="g" style="left:276.7px;top:443.6px;height:84.0px"></i>
<i class="g" style="left:276.7px;top:863.6px;height:84.0px"></i>
<div class="ln" style="top:-11.8px">10</div>
<div class="cl" style="top:-11.8px"><span style="color:#af00db">import</span> <span style="color:#0431fa">{</span><span style="color:#001080"> PlayerEntity </span><span style="color:#0431fa">}</span> <span style="color:#af00db">from</span> <span style="color:#a31515">"../entities/player-entity"</span><span style="color:#000000">;</span></div>
<div class="ln" style="top:30.2px">11</div>
<div class="ln" style="top:107.6px">12</div>
<div class="cl" style="top:107.6px"><span style="color:#af00db">export</span> <span style="color:#0000ff">function</span> <span style="color:#795e26">Scene</span><span style="color:#0431fa">()</span> <span style="color:#0431fa">{</span></div>
<div class="ln" style="top:149.6px">13</div>
<div class="cl" style="top:149.6px">  <span style="color:#795e26">useCamera</span><span style="color:#319331">()</span><span style="color:#000000">;</span></div>
<div class="ln" style="top:191.6px">14</div>
<div class="ln" style="top:233.6px">15</div>
<div class="cl" style="top:233.6px">  <span style="color:#af00db">return</span> <span style="color:#319331">(</span></div>
<div class="ln" style="top:275.6px">16</div>
<div class="cl" style="top:275.6px">    <span style="color:#800000">&lt;&gt;</span></div>
<div class="ln" style="top:317.6px">17</div>
<div class="cl" style="top:317.6px">      <span style="color:#800000">&lt;</span><span style="color:#267f99">CameraEntity</span></div>
<div class="ln" style="top:359.6px">18</div>
<div class="cl" style="top:359.6px">        <span style="color:#e50000">offset</span><span style="color:#000000">=</span><span style="color:#7b3814">{</span><span style="color:#0431fa">[</span><span style="color:#000000">-</span><span style="color:#098658">4.25</span><span style="color:#000000">,</span> <span style="color:#098658">5</span><span style="color:#000000">,</span> <span style="color:#098658">5.5</span><span style="color:#0431fa">]</span><span style="color:#7b3814">}</span></div>
<div class="ln" style="top:401.6px">19</div>
<div class="cl" style="top:401.6px">        <span style="color:#e50000">rotation</span><span style="color:#000000">=</span><span style="color:#7b3814">{</span><span style="color:#0431fa">[</span></div>
<div class="ln" style="top:443.6px">20</div>
<div class="cl" style="top:443.6px">          <span style="color:#000000">-</span><span style="color:#098658">0.680_678_408_277_788_5</span><span style="color:#000000">,</span> <span style="color:#000000">-</span><span style="color:#098658">0.541_052_068_118_242_1</span><span style="color:#000000">,</span></div>
<div class="ln" style="top:485.6px">21</div>
<div class="cl" style="top:485.6px">          <span style="color:#000000">-</span><span style="color:#098658">0.401_425_727_958_695_8</span><span style="color:#000000">,</span></div>
<div class="ln" style="top:527.6px">22</div>
<div class="cl" style="top:527.6px">        <span style="color:#0431fa">]</span><span style="color:#7b3814">}</span></div>
<div class="ln" style="top:569.6px">23</div>
<div class="cl" style="top:569.6px">      <span style="color:#800000">/&gt;</span></div>
<div class="ln" style="top:611.6px">24</div>
<div class="ln" style="top:653.6px">25</div>
<div class="cl" style="top:653.6px">      <span style="color:#800000">&lt;</span><span style="color:#267f99">PlayerEntity</span> <span style="color:#e50000">position</span><span style="color:#000000">=</span><span style="color:#7b3814">{</span><span style="color:#0431fa">[</span><span style="color:#098658">0</span><span style="color:#000000">,</span> <span style="color:#098658">0</span><span style="color:#000000">,</span> <span style="color:#098658">0</span><span style="color:#0431fa">]</span><span style="color:#7b3814">}</span> <span style="color:#800000">/&gt;</span></div>
<div class="ln" style="top:695.6px">26</div>
<div class="ln" style="top:737.6px">27</div>
<div class="cl" style="top:737.6px">      <span style="color:#800000">&lt;</span><span style="color:#267f99">PerspectiveCamera</span></div>
<div class="ln" style="top:779.6px">28</div>
<div class="cl" style="top:779.6px">        <span style="color:#e50000">makeDefault</span><span style="color:#000000">=</span><span style="color:#7b3814">{</span><span style="color:#0000ff">true</span><span style="color:#7b3814">}</span></div>
<div class="ln" style="top:821.6px">29</div>
<div class="cl" style="top:821.6px">        <span style="color:#e50000">position</span><span style="color:#000000">=</span><span style="color:#7b3814">{</span><span style="color:#0431fa">[</span></div>
<div class="ln" style="top:863.6px">30</div>
<div class="cl" style="top:863.6px">          <span style="color:#000000">-</span><span style="color:#098658">0.141_646_936_469_016_94</span><span style="color:#000000">,</span> <span style="color:#098658">1.732_122_037_827_79</span><span style="color:#000000">,</span></div>
<div class="ln" style="top:905.6px">31</div>
<div class="cl" style="top:905.6px">          <span style="color:#098658">2.068_985_775_667_036</span><span style="color:#000000">,</span></div>
<div class="ln" style="top:947.6px">32</div>
<div class="cl" style="top:947.6px">        <span style="color:#0431fa">]</span><span style="color:#7b3814">}</span></div>
<div class="ln" style="top:989.6px">33</div>
<div class="cl" style="top:989.6px">        <span style="color:#e50000">rotation</span><span style="color:#000000">=</span><span style="color:#7b3814">{</span><span style="color:#0431fa">[</span><span style="color:#000000">-</span><span style="color:#098658">0.249_804_765_644_363_16</span><span style="color:#000000">,</span> <span style="color:#098658">0</span><span style="color:#000000">,</span> <span style="color:#098658">0</span><span style="color:#0431fa">]</span><span style="color:#7b3814">}</span></div>
<div class="ln" style="top:1031.6px">34</div>
<div class="cl" style="top:1031.6px">      <span style="color:#800000">/&gt;</span></div>
<div class="ln" style="top:1073.6px">35</div>
<div class="ln" style="top:1115.6px">36</div>
<div class="cl" style="top:1115.6px">      <span style="color:#800000">&lt;mesh</span></div>
<div class="ln" style="top:1157.6px">37</div>
<div class="cl" style="top:1157.6px">        <span style="color:#e50000">position</span><span style="color:#000000">=</span><span style="color:#7b3814">{</span><span style="color:#0431fa">[</span><span style="color:#000000">-</span><span style="color:#098658">0.061_427_483_068_584_81</span><span style="color:#000000">,</span> <span style="color:#000000">-</span><span style="color:#098658">0.104_989_602_568_576_06</span><span style="color:#000000">,</span> <span style="color:#098658">0</span><span style="color:#0431fa">]</span><span style="color:#7b3814">}</span></div>
<div class="ln" style="top:1199.6px">38</div>
<div class="cl" style="top:1199.6px">        <span style="color:#e50000">receiveShadow</span><span style="color:#000000">=</span><span style="color:#7b3814">{</span><span style="color:#0000ff">true</span><span style="color:#7b3814">}</span></div>
<div class="ln" style="top:1241.6px">39</div>
<div class="cl" style="top:1241.6px">      <span style="color:#800000">&gt;</span></div>
<div class="ln" style="top:1283.6px">40</div>
<div class="cl" style="top:1283.6px">        <span style="color:#800000">&lt;</span><span style="color:#267f99">boxGeometry</span> <span style="color:#e50000">args</span><span style="color:#000000">=</span><span style="color:#7b3814">{</span><span style="color:#0431fa">[</span><span style="color:#098658">10</span><span style="color:#000000">,</span> <span style="color:#098658">0.2</span><span style="color:#000000">,</span> <span style="color:#098658">5</span><span style="color:#0431fa">]</span><span style="color:#7b3814">}</span> <span style="color:#800000">/&gt;</span></div>
<div class="ln" style="top:1325.6px">41</div>
<div class="cl" style="top:1325.6px">        <span style="color:#800000">&lt;</span><span style="color:#267f99">meshStandardMaterial</span> <span style="color:#800000">/&gt;</span></div>
<div class="ln" style="top:1367.6px">42</div>
<div class="cl" style="top:1367.6px">      <span style="color:#800000">&lt;/mesh&gt;</span></div>
<div class="ln" style="top:1409.6px">43</div>
<div class="cl" style="top:1409.6px">      <span style="color:#800000">&lt;</span><span style="color:#267f99">pointLight</span></div>
<div class="ln" style="top:1451.6px">44</div>
<div class="cl" style="top:1451.6px">        <span style="color:#e50000">castShadow</span><span style="color:#000000">=</span><span style="color:#7b3814">{</span><span style="color:#0000ff">true</span><span style="color:#7b3814">}</span></div>
<div class="lens" style="top:70.7px">Open in Triplex</div>
</div>
<div style="position:absolute;left:1464px;top:184px;width:1464px;height:7px;background:linear-gradient(#0000001f,#0000)"></div>
<div style="position:absolute;left:2748px;top:184px;width:180px;height:1474px;background:#fff;"></div>
<div style="position:absolute;left:2742px;top:184px;width:6px;height:1474px;background:linear-gradient(90deg,#0000,#00000012)"></div>
<svg width="152" height="1474" viewBox="0 0 152 1474" style="position:absolute;left:2748px;top:183px" shape-rendering="crispEdges">
<rect x="8" y="6.5" width="144" height="5" fill="#a6c8ff"/>
<rect x="8" y="36.5" width="144" height="5" fill="#a6c8ff"/>
<rect x="8" y="1" width="6" height="4" fill="#85c2a0"/>
<rect x="10" y="7" width="2" height="4" fill="#85c2a0"/>
<rect x="14" y="7" width="18" height="4" fill="#85c2a0"/>
<rect x="34" y="7" width="6" height="4" fill="#85c2a0"/>
<rect x="42" y="7" width="24" height="4" fill="#85c2a0"/>
<rect x="68" y="7" width="14" height="4" fill="#85c2a0"/>
<rect x="84" y="7" width="16" height="4" fill="#85c2a0"/>
<rect x="102" y="7" width="6" height="4" fill="#85c2a0"/>
<rect x="110" y="7" width="12" height="4" fill="#85c2a0"/>
<rect x="124" y="7" width="18" height="4" fill="#85c2a0"/>
<rect x="10" y="13" width="2" height="4" fill="#85c2a0"/>
<rect x="10" y="19" width="2" height="4" fill="#85c2a0"/>
<rect x="14" y="19" width="8" height="4" fill="#85c2a0"/>
<rect x="24" y="19" width="20" height="4" fill="#85c2a0"/>
<rect x="46" y="19" width="16" height="4" fill="#85c2a0"/>
<rect x="64" y="19" width="16" height="4" fill="#85c2a0"/>
<rect x="82" y="19" width="16" height="4" fill="#85c2a0"/>
<rect x="100" y="19" width="12" height="4" fill="#85c2a0"/>
<rect x="114" y="19" width="18" height="4" fill="#85c2a0"/>
<rect x="134" y="19" width="18" height="4" fill="#85c2a0"/>
<rect x="10" y="25" width="2" height="4" fill="#85c2a0"/>
<rect x="14" y="25" width="6" height="4" fill="#85c2a0"/>
<rect x="22" y="25" width="8" height="4" fill="#85c2a0"/>
<rect x="32" y="25" width="10" height="4" fill="#85c2a0"/>
<rect x="44" y="25" width="14" height="4" fill="#85c2a0"/>
<rect x="60" y="25" width="8" height="4" fill="#85c2a0"/>
<rect x="70" y="25" width="6" height="4" fill="#85c2a0"/>
<rect x="78" y="25" width="14" height="4" fill="#85c2a0"/>
<rect x="94" y="25" width="14" height="4" fill="#85c2a0"/>
<rect x="110" y="25" width="8" height="4" fill="#85c2a0"/>
<rect x="120" y="25" width="4" height="4" fill="#85c2a0"/>
<rect x="126" y="25" width="6" height="4" fill="#85c2a0"/>
<rect x="134" y="25" width="12" height="4" fill="#85c2a0"/>
<rect x="148" y="25" width="4" height="4" fill="#85c2a0"/>
<rect x="10" y="31" width="4" height="4" fill="#85c2a0"/>
<rect x="8" y="37" width="12" height="4" fill="#d372eb"/>
<rect x="22" y="37" width="2" height="4" fill="#748dfc"/>
<rect x="26" y="37" width="34" height="4" fill="#727bb9"/>
<rect x="62" y="37" width="2" height="4" fill="#748dfc"/>
<rect x="66" y="37" width="8" height="4" fill="#d372eb"/>
<rect x="76" y="37" width="38" height="4" fill="#cc7e7e"/>
<rect x="114" y="37" width="2" height="4" fill="#8a8a8a"/>
<rect x="8" y="43" width="12" height="4" fill="#d372eb"/>
<rect x="22" y="43" width="2" height="4" fill="#748dfc"/>
<rect x="26" y="43" width="18" height="4" fill="#727bb9"/>
<rect x="46" y="43" width="2" height="4" fill="#748dfc"/>
<rect x="50" y="43" width="8" height="4" fill="#d372eb"/>
<rect x="60" y="43" width="46" height="4" fill="#cc7e7e"/>
<rect x="106" y="43" width="2" height="4" fill="#8a8a8a"/>
<rect x="8" y="49" width="12" height="4" fill="#d372eb"/>
<rect x="22" y="49" width="2" height="4" fill="#748dfc"/>
<rect x="26" y="49" width="24" height="4" fill="#727bb9"/>
<rect x="52" y="49" width="2" height="4" fill="#748dfc"/>
<rect x="56" y="49" width="8" height="4" fill="#d372eb"/>
<rect x="66" y="49" width="54" height="4" fill="#cc7e7e"/>
<rect x="120" y="49" width="2" height="4" fill="#8a8a8a"/>
<rect x="8" y="55" width="12" height="4" fill="#d372eb"/>
<rect x="22" y="55" width="2" height="4" fill="#748dfc"/>
<rect x="26" y="55" width="24" height="4" fill="#727bb9"/>
<rect x="52" y="55" width="2" height="4" fill="#748dfc"/>
<rect x="56" y="55" width="8" height="4" fill="#d372eb"/>
<rect x="66" y="55" width="54" height="4" fill="#cc7e7e"/>
<rect x="120" y="55" width="2" height="4" fill="#8a8a8a"/>
<rect x="8" y="67" width="12" height="4" fill="#d372eb"/>
<rect x="22" y="67" width="16" height="4" fill="#7272ff"/>
<rect x="40" y="67" width="10" height="4" fill="#b5a687"/>
<rect x="50" y="67" width="4" height="4" fill="#748dfc"/>
<rect x="56" y="67" width="2" height="4" fill="#748dfc"/>
<rect x="12" y="73" width="18" height="4" fill="#b5a687"/>
<rect x="30" y="73" width="4" height="4" fill="#8dc38d"/>
<rect x="34" y="73" width="2" height="4" fill="#8a8a8a"/>
<rect x="12" y="85" width="12" height="4" fill="#d372eb"/>
<rect x="26" y="85" width="2" height="4" fill="#8dc38d"/>
<rect x="16" y="91" width="4" height="4" fill="#b97272"/>
<rect x="20" y="97" width="2" height="4" fill="#b97272"/>
<rect x="22" y="97" width="24" height="4" fill="#87b8c6"/>
<rect x="24" y="103" width="12" height="4" fill="#f07272"/>
<rect x="36" y="103" width="2" height="4" fill="#8a8a8a"/>
<rect x="38" y="103" width="2" height="4" fill="#b6917d"/>
<rect x="40" y="103" width="2" height="4" fill="#748dfc"/>
<rect x="42" y="103" width="2" height="4" fill="#8a8a8a"/>
<rect x="44" y="103" width="8" height="4" fill="#77bca3"/>
<rect x="52" y="103" width="2" height="4" fill="#8a8a8a"/>
<rect x="56" y="103" width="2" height="4" fill="#77bca3"/>
<rect x="58" y="103" width="2" height="4" fill="#8a8a8a"/>
<rect x="62" y="103" width="6" height="4" fill="#77bca3"/>
<rect x="68" y="103" width="2" height="4" fill="#748dfc"/>
<rect x="70" y="103" width="2" height="4" fill="#b6917d"/>
<rect x="24" y="109" width="16" height="4" fill="#f07272"/>
<rect x="40" y="109" width="2" height="4" fill="#8a8a8a"/>
<rect x="42" y="109" width="2" height="4" fill="#b6917d"/>
<rect x="44" y="109" width="2" height="4" fill="#748dfc"/>
<rect x="28" y="115" width="2" height="4" fill="#8a8a8a"/>
<rect x="30" y="115" width="46" height="4" fill="#77bca3"/>
<rect x="76" y="115" width="2" height="4" fill="#8a8a8a"/>
<rect x="80" y="115" width="2" height="4" fill="#8a8a8a"/>
<rect x="82" y="115" width="46" height="4" fill="#77bca3"/>
<rect x="128" y="115" width="2" height="4" fill="#8a8a8a"/>
<rect x="28" y="121" width="2" height="4" fill="#8a8a8a"/>
<rect x="30" y="121" width="46" height="4" fill="#77bca3"/>
<rect x="76" y="121" width="2" height="4" fill="#8a8a8a"/>
<rect x="24" y="127" width="2" height="4" fill="#748dfc"/>
<rect x="26" y="127" width="2" height="4" fill="#b6917d"/>
<rect x="20" y="133" width="4" height="4" fill="#b97272"/>
<rect x="20" y="145" width="2" height="4" fill="#b97272"/>
<rect x="22" y="145" width="24" height="4" fill="#87b8c6"/>
<rect x="48" y="145" width="16" height="4" fill="#f07272"/>
<rect x="64" y="145" width="2" height="4" fill="#8a8a8a"/>
<rect x="66" y="145" width="2" height="4" fill="#b6917d"/>
<rect x="68" y="145" width="2" height="4" fill="#748dfc"/>
<rect x="70" y="145" width="2" height="4" fill="#77bca3"/>
<rect x="72" y="145" width="2" height="4" fill="#8a8a8a"/>
<rect x="76" y="145" width="2" height="4" fill="#77bca3"/>
<rect x="78" y="145" width="2" height="4" fill="#8a8a8a"/>
<rect x="82" y="145" width="2" height="4" fill="#77bca3"/>
<rect x="84" y="145" width="2" height="4" fill="#748dfc"/>
<rect x="86" y="145" width="2" height="4" fill="#b6917d"/>
<rect x="90" y="145" width="4" height="4" fill="#b97272"/>
<rect x="20" y="157" width="2" height="4" fill="#b97272"/>
<rect x="22" y="157" width="34" height="4" fill="#87b8c6"/>
<rect x="24" y="163" width="22" height="4" fill="#f07272"/>
<rect x="46" y="163" width="2" height="4" fill="#8a8a8a"/>
<rect x="48" y="163" width="2" height="4" fill="#b6917d"/>
<rect x="50" y="163" width="8" height="4" fill="#7272ff"/>
<rect x="58" y="163" width="2" height="4" fill="#b6917d"/>
<rect x="24" y="169" width="16" height="4" fill="#f07272"/>
<rect x="40" y="169" width="2" height="4" fill="#8a8a8a"/>
<rect x="42" y="169" width="2" height="4" fill="#b6917d"/>
<rect x="44" y="169" width="2" height="4" fill="#748dfc"/>
<rect x="28" y="175" width="2" height="4" fill="#8a8a8a"/>
<rect x="30" y="175" width="48" height="4" fill="#77bca3"/>
<rect x="78" y="175" width="2" height="4" fill="#8a8a8a"/>
<rect x="82" y="175" width="40" height="4" fill="#77bca3"/>
<rect x="122" y="175" width="2" height="4" fill="#8a8a8a"/>
<rect x="28" y="181" width="42" height="4" fill="#77bca3"/>
<rect x="70" y="181" width="2" height="4" fill="#8a8a8a"/>
<rect x="24" y="187" width="2" height="4" fill="#748dfc"/>
<rect x="26" y="187" width="2" height="4" fill="#b6917d"/>
<rect x="24" y="193" width="16" height="4" fill="#f07272"/>
<rect x="40" y="193" width="2" height="4" fill="#8a8a8a"/>
<rect x="42" y="193" width="2" height="4" fill="#b6917d"/>
<rect x="44" y="193" width="2" height="4" fill="#748dfc"/>
<rect x="46" y="193" width="2" height="4" fill="#8a8a8a"/>
<rect x="48" y="193" width="48" height="4" fill="#77bca3"/>
<rect x="96" y="193" width="2" height="4" fill="#8a8a8a"/>
<rect x="100" y="193" width="2" height="4" fill="#77bca3"/>
<rect x="102" y="193" width="2" height="4" fill="#8a8a8a"/>
<rect x="106" y="193" width="2" height="4" fill="#77bca3"/>
<rect x="108" y="193" width="2" height="4" fill="#748dfc"/>
<rect x="110" y="193" width="2" height="4" fill="#b6917d"/>
<rect x="20" y="199" width="4" height="4" fill="#b97272"/>
<rect x="20" y="211" width="10" height="4" fill="#b97272"/>
<rect x="24" y="217" width="16" height="4" fill="#f07272"/>
<rect x="40" y="217" width="2" height="4" fill="#8a8a8a"/>
<rect x="42" y="217" width="2" height="4" fill="#b6917d"/>
<rect x="44" y="217" width="2" height="4" fill="#748dfc"/>
<rect x="46" y="217" width="2" height="4" fill="#8a8a8a"/>
<rect x="48" y="217" width="48" height="4" fill="#77bca3"/>
<rect x="96" y="217" width="2" height="4" fill="#8a8a8a"/>
<rect x="100" y="217" width="2" height="4" fill="#8a8a8a"/>
<rect x="102" y="217" width="48" height="4" fill="#77bca3"/>
<rect x="150" y="217" width="2" height="4" fill="#8a8a8a"/>
<rect x="24" y="223" width="26" height="4" fill="#f07272"/>
<rect x="50" y="223" width="2" height="4" fill="#8a8a8a"/>
<rect x="52" y="223" width="2" height="4" fill="#b6917d"/>
<rect x="54" y="223" width="8" height="4" fill="#7272ff"/>
<rect x="62" y="223" width="2" height="4" fill="#b6917d"/>
<rect x="20" y="229" width="2" height="4" fill="#b97272"/>
<rect x="24" y="235" width="2" height="4" fill="#b97272"/>
<rect x="26" y="235" width="22" height="4" fill="#87b8c6"/>
<rect x="50" y="235" width="8" height="4" fill="#f07272"/>
<rect x="58" y="235" width="2" height="4" fill="#8a8a8a"/>
<rect x="60" y="235" width="2" height="4" fill="#b6917d"/>
<rect x="62" y="235" width="2" height="4" fill="#748dfc"/>
<rect x="64" y="235" width="4" height="4" fill="#77bca3"/>
<rect x="68" y="235" width="2" height="4" fill="#8a8a8a"/>
<rect x="72" y="235" width="6" height="4" fill="#77bca3"/>
<rect x="78" y="235" width="2" height="4" fill="#8a8a8a"/>
<rect x="82" y="235" width="2" height="4" fill="#77bca3"/>
<rect x="84" y="235" width="2" height="4" fill="#748dfc"/>
<rect x="86" y="235" width="2" height="4" fill="#b6917d"/>
<rect x="90" y="235" width="4" height="4" fill="#b97272"/>
<rect x="24" y="241" width="2" height="4" fill="#b97272"/>
<rect x="26" y="241" width="40" height="4" fill="#87b8c6"/>
<rect x="68" y="241" width="4" height="4" fill="#b97272"/>
<rect x="20" y="247" width="14" height="4" fill="#b97272"/>
<rect x="20" y="253" width="2" height="4" fill="#b97272"/>
<rect x="22" y="253" width="20" height="4" fill="#87b8c6"/>
<rect x="24" y="259" width="20" height="4" fill="#f07272"/>
<rect x="44" y="259" width="2" height="4" fill="#8a8a8a"/>
<rect x="46" y="259" width="2" height="4" fill="#b6917d"/>
<rect x="48" y="259" width="8" height="4" fill="#7272ff"/>
<rect x="56" y="259" width="2" height="4" fill="#b6917d"/>
<rect x="24" y="265" width="18" height="4" fill="#f07272"/>
<rect x="42" y="265" width="2" height="4" fill="#8a8a8a"/>
<rect x="44" y="265" width="2" height="4" fill="#b6917d"/>
<rect x="46" y="265" width="4" height="4" fill="#77bca3"/>
<rect x="50" y="265" width="2" height="4" fill="#b6917d"/>
<rect x="24" y="271" width="16" height="4" fill="#f07272"/>
<rect x="40" y="271" width="2" height="4" fill="#8a8a8a"/>
<rect x="42" y="271" width="2" height="4" fill="#b6917d"/>
<rect x="44" y="271" width="2" height="4" fill="#748dfc"/>
<rect x="28" y="277" width="2" height="4" fill="#8a8a8a"/>
<rect x="30" y="277" width="42" height="4" fill="#77bca3"/>
<rect x="72" y="277" width="2" height="4" fill="#8a8a8a"/>
<rect x="76" y="277" width="46" height="4" fill="#77bca3"/>
<rect x="122" y="277" width="2" height="4" fill="#8a8a8a"/>
<rect x="28" y="283" width="46" height="4" fill="#77bca3"/>
<rect x="74" y="283" width="2" height="4" fill="#8a8a8a"/>
<rect x="24" y="289" width="2" height="4" fill="#748dfc"/>
<rect x="26" y="289" width="2" height="4" fill="#b6917d"/>
<rect x="20" y="295" width="4" height="4" fill="#b97272"/>
<rect x="20" y="307" width="2" height="4" fill="#b97272"/>
<rect x="22" y="307" width="24" height="4" fill="#87b8c6"/>
<rect x="24" y="313" width="10" height="4" fill="#f07272"/>
<rect x="34" y="313" width="2" height="4" fill="#8a8a8a"/>
<rect x="36" y="313" width="12" height="4" fill="#cc7e7e"/>
<rect x="24" y="319" width="18" height="4" fill="#f07272"/>
<rect x="42" y="319" width="2" height="4" fill="#8a8a8a"/>
<rect x="44" y="319" width="2" height="4" fill="#b6917d"/>
<rect x="46" y="319" width="48" height="4" fill="#77bca3"/>
<rect x="94" y="319" width="2" height="4" fill="#b6917d"/>
<rect x="98" y="319" width="4" height="4" fill="#b97272"/>
<rect x="20" y="325" width="4" height="4" fill="#b97272"/>
<rect x="16" y="331" width="6" height="4" fill="#b97272"/>
<rect x="12" y="337" width="2" height="4" fill="#8dc38d"/>
<rect x="14" y="337" width="2" height="4" fill="#8a8a8a"/>
<rect x="8" y="343" width="2" height="4" fill="#748dfc"/>
<rect x="84" y="6.5" width="14" height="5" fill="#2f7ff0"/><rect x="104" y="36.5" width="8" height="5" fill="#2f7ff0"/>
</svg>
<div style="position:absolute;left:2900px;top:191px;width:1.5px;height:1467px;background:#f3f3f3;"></div>
<div style="position:absolute;left:2901px;top:194.5px;width:27px;height:4.5px;background:#424242;"></div>
<div style="position:absolute;left:2919px;top:212px;width:9px;height:16px;background:#2f80ed;"></div>
<div style="position:absolute;left:2919px;top:290px;width:9px;height:16px;background:#2f80ed;"></div>
<div style="position:absolute;left:2910px;top:895px;width:8px;height:14px;background:#a9c1d4;"></div>
<div style="position:absolute;left:2928px;top:70px;width:96px;height:1588px;background:#f8f8f8;"></div>
<div style="position:absolute;left:2928px;top:70px;width:2px;height:1588px;background:#e5e5e5;"></div>
<svg viewBox="1 0.5 14 15" width="48" height="52" style="position:absolute;left:2952.0px;top:92.0px;overflow:visible" fill="none" stroke="#616161" stroke-width="1.15" stroke-linecap="round" stroke-linejoin="round" ><path d="M10 1.5H6.5a1 1 0 0 0-1 1v8a1 1 0 0 0 1 1h6a1 1 0 0 0 1-1V5zM10 1.5V5h3.5M5.5 4.5H3.5a1 1 0 0 0-1 1v8a1 1 0 0 0 1 1h6a1 1 0 0 0 1-1v-2"/></svg>
<svg viewBox="0 0.5 15.5 15.5" width="52" height="52" style="position:absolute;left:2950.0px;top:188.0px;overflow:visible" fill="none" stroke="#616161" stroke-width="1.1" stroke-linecap="round" stroke-linejoin="round" ><path d="M5.5 1.5l9 5-4.5 2.7M5.5 1.5v4"/><ellipse cx="4.5" cy="10.5" rx="2.3" ry="3"/><path d="M2.5 9H6.5M1 8.5l1.5.8M8 8.5l-1.5.8M.8 11h1.5M6.7 11h1.5M1 13.5l1.5-.9M8 13.5l-1.5-.9"/></svg>
<svg viewBox="0.5 1 15 15" width="50" height="50" style="position:absolute;left:2952.0px;top:284.0px;overflow:visible" fill="none" stroke="#616161" stroke-width="1.15" stroke-linecap="round" stroke-linejoin="round" ><circle cx="9.5" cy="6.5" r="4.5"/><path d="M6.3 9.7L1.5 14.5"/></svg>
<svg viewBox="0.5 0.5 15 15" width="52" height="52" style="position:absolute;left:2950.0px;top:380.0px;overflow:visible" fill="none" stroke="#616161" stroke-width="1.1" stroke-linecap="round" stroke-linejoin="round" ><path d="M2.3 6.5h3.4a.8.8 0 0 1 .8.8v6.4a.8.8 0 0 1-.8.8H2.3a.8.8 0 0 1-.8-.8V7.3a.8.8 0 0 1 .8-.8zM1.5 10.5h9.2a.8.8 0 0 1 .8.8v2.4a.8.8 0 0 1-.8.8H6M6.5 10.5v4"/><rect x="9.8" y="1.5" width="4.4" height="4.4" rx=".8"/></svg>
<svg viewBox="1 1 14 14" width="48" height="48" style="position:absolute;left:2952.0px;top:478.0px;overflow:visible" fill="none" stroke="#616161" stroke-width="1.1" stroke-linecap="round" stroke-linejoin="round" ><rect x="2" y="1.8" width="5" height="5" rx="1"/><rect x="9" y="9.2" width="5" height="5" rx="1"/><path d="M4.5 6.8v3.5a1.5 1.5 0 0 0 1.5 1.5h3"/></svg>
<svg viewBox="0 0 16 16" width="52" height="52" style="position:absolute;left:2950.0px;top:1487.8px;overflow:visible" fill="none" stroke="#616161" stroke-width="1.05" stroke-linecap="round" stroke-linejoin="round" ><circle cx="8" cy="8" r="6.8"/><circle cx="8" cy="6.7" r="2.9"/><path d="M4.1 13.4c.5-2.3 2-3.7 3.9-3.7s3.4 1.4 3.9 3.7"/></svg>
<svg viewBox="0 0 16 16" width="51" height="51" style="position:absolute;left:2950.5px;top:1584.3px;overflow:visible" fill="none" stroke="#616161" stroke-width="1.07" stroke-linecap="round" stroke-linejoin="round" stroke-linejoin="miter"><path d="M9.14 3.24L9.02 1.18L6.98 1.18L6.86 3.24L5.44 3.82L3.90 2.45L2.45 3.90L3.82 5.44L3.24 6.86L1.18 6.98L1.18 9.02L3.24 9.14L3.82 10.56L2.45 12.10L3.90 13.55L5.44 12.18L6.86 12.76L6.98 14.82L9.02 14.82L9.14 12.76L10.56 12.18L12.10 13.55L13.55 12.10L12.18 10.56L12.76 9.14L14.82 9.02L14.82 6.98L12.76 6.86L12.18 5.44L13.55 3.90L12.10 2.45L10.56 3.82Z"/><circle cx="8" cy="8" r="1.55"/></svg>
<div style="position:absolute;left:2976px;top:406px;width:32px;height:32px;border-radius:50%;background:#005fb8;color:#fff;font-size:18.5px;font-weight:bold;line-height:32px;text-align:center">2</div>
<div style="position:absolute;left:2976px;top:1610px;width:32px;height:32px;border-radius:50%;background:#005fb8;color:#fff;font-size:18.5px;font-weight:bold;line-height:32px;text-align:center">1</div>
<div style="position:absolute;left:0px;top:1658px;width:3024px;height:44px;background:#f8f8f8;"></div>
<div style="position:absolute;left:0px;top:1658px;width:3024px;height:2px;background:#e5e5e5;"></div>
<div style="position:absolute;left:0;top:1660px;width:68px;height:42px;background:#005fb8;"></div>
<svg viewBox="0 0 30 40" width="30" height="40" style="position:absolute;left:20.0px;top:1660.0px;overflow:visible" fill="none" stroke="#fff" stroke-width="1.7" stroke-linecap="round" stroke-linejoin="round" ><path d="M5.6 15.6L14 23L5.6 30.8M21.7 8.4L14.9 15.6L21.7 23"/></svg>
<svg viewBox="0 0 16 16" width="30" height="30" style="position:absolute;left:79.0px;top:1665.5px;overflow:visible" fill="none" stroke="#3b3b3b" stroke-width="1.05" stroke-linecap="round" stroke-linejoin="round" ><circle cx="4.5" cy="3" r="1.7"/><circle cx="4.5" cy="13" r="1.7"/><circle cx="11.5" cy="5.5" r="1.7"/><path d="M4.5 4.7v6.6M11.5 7.2c0 2.5-2.5 3-7 3.3"/></svg>
<span class="t" style="left:115.7px;top:1666.3px;font-size:24.5px;line-height:30.62px;color:#3b3b3b;letter-spacing:0.70px;">landing-page-march*</span>
<svg viewBox="0 0 16 16" width="30" height="30" style="position:absolute;left:369.5px;top:1665.5px;overflow:visible" fill="none" stroke="#3b3b3b" stroke-width="1.05" stroke-linecap="round" stroke-linejoin="round" ><path d="M2.5 7a5.6 5.6 0 0 1 10.2-2.2M13.5 9a5.6 5.6 0 0 1-10.2 2.2M13.2 2v3h-3M2.8 14v-3h3"/></svg>
<span class="t" style="left:405.7px;top:1666.3px;font-size:24.5px;line-height:30.62px;color:#3b3b3b;">0</span>
<span class="t" style="left:446.8px;top:1666.3px;font-size:24.5px;line-height:30.62px;color:#3b3b3b;">2</span>
<span class="t" style="left:418.5px;top:1666.3px;font-size:24px;line-height:30.00px;color:#3b3b3b;font-family:'DejaVu Sans','Liberation Sans',sans-serif;">↓</span>
<span class="t" style="left:459.5px;top:1666.3px;font-size:24px;line-height:30.00px;color:#3b3b3b;font-family:'DejaVu Sans','Liberation Sans',sans-serif;">↑</span>
<svg viewBox="0 0 16 16" width="30" height="30" style="position:absolute;left:505.0px;top:1665.5px;overflow:visible" fill="none" stroke="#3b3b3b" stroke-width="1.05" stroke-linecap="round" stroke-linejoin="round" ><circle cx="4.5" cy="2.8" r="1.6"/><circle cx="4.5" cy="13.2" r="1.6"/><circle cx="11.5" cy="8" r="1.6"/><path d="M4.5 4.4v7.2M8 1v14M11.5 9.6c0 2-1.5 2.5-3.5 2.6"/></svg>
<svg viewBox="0 0 16 16" width="28" height="28" style="position:absolute;left:567.0px;top:1666.5px;overflow:visible" fill="none" stroke="#3b3b3b" stroke-width="1.05" stroke-linecap="round" stroke-linejoin="round" ><path d="M14 2c-4 0-7 2-8.5 6l2.5 2.5C12 9 14 6 14 2zM5.5 8l-3 .5L1.5 11M8 10.5l-.5 3L5 14.5M4 12l-2 2"/><circle cx="10.5" cy="5.5" r="1"/></svg>
<svg viewBox="0 0 16 16" width="26" height="26" style="position:absolute;left:596.0px;top:1667.5px;overflow:visible" fill="none" stroke="#3b3b3b" stroke-width="1.05" stroke-linecap="round" stroke-linejoin="round" ><path d="M5 7l4 4M6 6l-1.5 1.5a2.8 2.8 0 0 0 4 4L10 10M11 9l1.5-1.5M7 5l1.5-1.5M9 3l4 4M13.5 2.5l-2 2M2.5 13.5l2-2"/></svg>
<span class="t" style="left:631.0px;top:1666.3px;font-size:24.5px;line-height:30.62px;color:#3b3b3b;letter-spacing:0.19px;">Launchpad</span>
<svg viewBox="0 0 16 16" width="27" height="27" style="position:absolute;left:787.5px;top:1667.0px;overflow:visible" fill="none" stroke="#3b3b3b" stroke-width="1.05" stroke-linecap="round" stroke-linejoin="round" ><circle cx="8" cy="8" r="6.5"/><path d="M5.5 5.5l5 5M10.5 5.5l-5 5"/></svg>
<span class="t" style="left:823.0px;top:1666.3px;font-size:24.5px;line-height:30.62px;color:#3b3b3b;">0</span>
<svg viewBox="0 0 16 16" width="27" height="27" style="position:absolute;left:844.5px;top:1667.0px;overflow:visible" fill="none" stroke="#3b3b3b" stroke-width="1.05" stroke-linecap="round" stroke-linejoin="round" ><path d="M8 2L1.5 13.5h13zM8 6.5v3.5"/><circle cx="8" cy="11.7" r=".5" fill="#3b3b3b" stroke="none"/></svg>
<span class="t" style="left:880.0px;top:1666.3px;font-size:24.5px;line-height:30.62px;color:#3b3b3b;">0</span>
<svg viewBox="0 0 16 16" width="27" height="27" style="position:absolute;left:900.8px;top:1667.0px;overflow:visible" fill="none" stroke="#3b3b3b" stroke-width="1.05" stroke-linecap="round" stroke-linejoin="round" ><circle cx="8" cy="8" r="6.5"/><path d="M8 7.5v3.5"/><circle cx="8" cy="5.2" r=".5" fill="#3b3b3b" stroke="none"/></svg>
<span class="t" style="left:936.7px;top:1666.3px;font-size:24.5px;line-height:30.62px;color:#3b3b3b;">2</span>
<svg viewBox="0 0 16 16" width="30" height="30" style="position:absolute;left:2965.0px;top:1665.0px;overflow:visible" fill="none" stroke="#3b3b3b" stroke-width="1.0" stroke-linecap="round" stroke-linejoin="round" ><path d="M3 11.5h10l-1.2-2.5V6.5a3.8 3.8 0 0 0-7.6 0V9zM7 13a1 1 0 0 0 2 0"/></svg>
<div style="position:absolute;left:0;top:0;width:20px;height:20px;background:radial-gradient(circle at 100% 100%,#0000 19.3px,#fff 20.3px)"></div>
<div style="position:absolute;right:0;top:0;width:20px;height:20px;background:radial-gradient(circle at 0% 100%,#0000 19.3px,#fff 20.3px)"></div>
<div style="position:absolute;left:0;bottom:0;width:20px;height:20px;background:radial-gradient(circle at 100% 0%,#0000 19.3px,#fff 20.3px)"></div>
<div style="position:absolute;right:0;bottom:0;width:20px;height:20px;background:radial-gradient(circle at 0% 0%,#0000 19.3px,#fff 20.3px)"></div>
</div></body></html>
